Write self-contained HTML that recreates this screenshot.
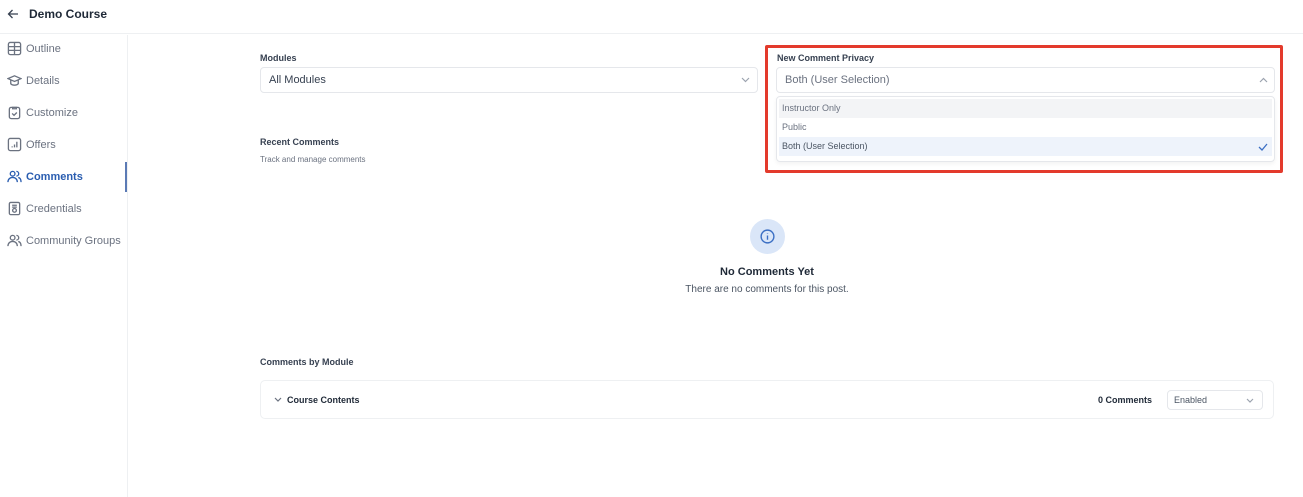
<!DOCTYPE html><html><head><style>
*{box-sizing:border-box;margin:0;padding:0}
body{width:1303px;height:497px;background:#fff;font-family:"Liberation Sans",sans-serif;color:#1f2937;position:relative;overflow:hidden}
.a{position:absolute}
.nav{position:absolute;left:7px;font-size:11px;color:#6b7280;display:flex;align-items:center;gap:4px}
.nav svg{width:15px;height:15px;fill:none;stroke:#6b7280;stroke-width:1.4}
.sel{position:absolute;border:1px solid #e5e7eb;border-radius:4px;background:#fff;font-size:11px;padding-left:8px;display:flex;align-items:center}
.chev{position:absolute;fill:none;stroke:#9ca3af;stroke-width:1.2}
</style></head><body>
<div class="a" style="left:0;top:0;width:1303px;height:34px;border-bottom:1px solid #eef0f2"></div>
<svg class="a" style="left:7px;top:8px" width="12" height="12" viewBox="0 0 12 12" fill="none" stroke="#374151" stroke-width="1.3"><path d="M11 6H1.5M5.5 2L1.5 6l4 4"/></svg>
<div class="a" style="left:29px;top:7px;font-size:12px;font-weight:bold;color:#1f2937">Demo Course</div>
<div class="a" style="left:127px;top:35px;width:1px;height:462px;background:#eef0f2"></div>
<div class="a" style="left:125px;top:162px;width:2px;height:30px;background:#5b7ab5"></div>
<div class="nav" style="top:41px"><svg viewBox="0 0 16 16"><rect x="1.5" y="1.5" width="13" height="13" rx="2"/><path d="M1.5 6h13M1.5 10h13M8 1.5v13"/></svg>Outline</div>
<div class="nav" style="top:73px"><svg viewBox="0 0 16 16"><path d="M1 6l7-3 7 3-7 3z M4 7.5v4c2 2 6 2 8 0v-4"/></svg>Details</div>
<div class="nav" style="top:105px"><svg viewBox="0 0 16 16"><rect x="2.5" y="2.5" width="11" height="12" rx="2"/><path d="M6 2.5h4v1.5H6zM5.5 9l2 2 3-3"/></svg>Customize</div>
<div class="nav" style="top:137px"><svg viewBox="0 0 16 16"><rect x="1.5" y="1.5" width="13" height="13" rx="2"/><path d="M5.5 11v-1M8 11V8M10.5 11V5"/></svg>Offers</div>
<div class="nav" style="top:169px;color:#2a5db0;font-weight:bold"><svg viewBox="0 0 16 16" style="stroke:#2a5db0"><circle cx="6" cy="5" r="2.5"/><path d="M1 14c0-3 2-5 5-5s5 2 5 5M10 2.5a2.5 2.5 0 0 1 0 5M12 9c2 .5 3 2.5 3 5"/></svg>Comments</div>
<div class="nav" style="top:201px"><svg viewBox="0 0 16 16"><rect x="2.5" y="1.5" width="11" height="13" rx="1.5"/><path d="M5.5 4.5h5M5.5 6.5h5"/><circle cx="8" cy="10" r="2"/></svg>Credentials</div>
<div class="nav" style="top:233px"><svg viewBox="0 0 16 16"><circle cx="6" cy="5" r="2.5"/><path d="M1 14c0-3 2-5 5-5s5 2 5 5M10 2.5a2.5 2.5 0 0 1 0 5M12 9c2 .5 3 2.5 3 5"/></svg>Community Groups</div>

<div class="a" style="left:260px;top:53px;font-size:9px;font-weight:bold;color:#374151">Modules</div>
<div class="sel" style="left:260px;top:67px;width:498px;height:26px;color:#374151">All Modules</div>
<svg class="chev" style="left:741px;top:77px" width="9" height="6" viewBox="0 0 9 6"><path d="M1 1l3.5 3.5L8 1"/></svg>
<div class="a" style="left:260px;top:137px;font-size:9px;font-weight:bold;color:#374151">Recent Comments</div>
<div class="a" style="left:260px;top:155px;font-size:8px;color:#6b7280">Track and manage comments</div>

<div class="a" style="left:765px;top:45px;width:518px;height:128px;border:3px solid #e33a2c;border-radius:2px"></div>
<div class="a" style="left:777px;top:53px;font-size:9px;font-weight:bold;color:#374151">New Comment Privacy</div>
<div class="sel" style="left:776px;top:67px;width:499px;height:26px;color:#6b7280">Both (User Selection)</div>
<svg class="chev" style="left:1259px;top:77px" width="9" height="6" viewBox="0 0 9 6"><path d="M1 5l3.5-3.5L8 5"/></svg>
<div class="a" style="left:776px;top:96px;width:499px;height:66px;border:1px solid #e5e7eb;border-radius:4px;box-shadow:0 2px 4px rgba(0,0,0,.05)"></div>
<div class="a" style="left:779px;top:99px;width:493px;height:19px;background:#f3f4f6;font-size:9px;color:#6b7280;padding:4px 3px">Instructor Only</div>
<div class="a" style="left:779px;top:118px;width:493px;height:19px;font-size:9px;color:#6b7280;padding:4px 3px">Public</div>
<div class="a" style="left:779px;top:137px;width:493px;height:19px;background:#eef3fb;font-size:9px;color:#4b5563;padding:4px 3px">Both (User Selection)</div>
<svg class="a" style="left:1258px;top:143px" width="10" height="8" viewBox="0 0 10 8" fill="none" stroke="#3b6fc4" stroke-width="1.3"><path d="M1 4l3 3 5-6"/></svg>

<div class="a" style="left:750px;top:219px;width:35px;height:35px;border-radius:50%;background:#dae6f8"></div>
<svg class="a" style="left:759px;top:228px" width="17" height="17" viewBox="0 0 16 16" fill="none" stroke="#3b6fc4" stroke-width="1.3"><circle cx="8" cy="8" r="6"/><path d="M8 7v4M8 5v.5"/></svg>
<div class="a" style="left:0;width:1534px;top:266px;text-align:center;font-size:11px;font-weight:bold;color:#1f2937">No Comments Yet</div>
<div class="a" style="left:0;width:1534px;top:284px;text-align:center;font-size:10px;color:#4b5563">There are no comments for this post.</div>

<div class="a" style="left:260px;top:357px;font-size:9px;font-weight:bold;color:#374151">Comments by Module</div>
<div class="a" style="left:260px;top:380px;width:1014px;height:39px;border:1px solid #eef0f2;border-radius:5px"></div>
<svg class="chev" style="left:274px;top:397px;stroke:#6b7280" width="8" height="6" viewBox="0 0 8 6"><path d="M1 1l3 3 3-3"/></svg>
<div class="a" style="left:287px;top:395px;font-size:9px;font-weight:bold;color:#1f2937">Course Contents</div>
<div class="a" style="left:1098px;top:395px;font-size:9px;font-weight:bold;color:#1f2937">0 Comments</div>
<div class="sel" style="left:1167px;top:390px;width:96px;height:20px;font-size:9px;color:#4b5563;padding-left:6px">Enabled</div>
<svg class="chev" style="left:1246px;top:398px" width="8" height="6" viewBox="0 0 8 6"><path d="M1 1l3 3 3-3"/></svg>
</body></html>
